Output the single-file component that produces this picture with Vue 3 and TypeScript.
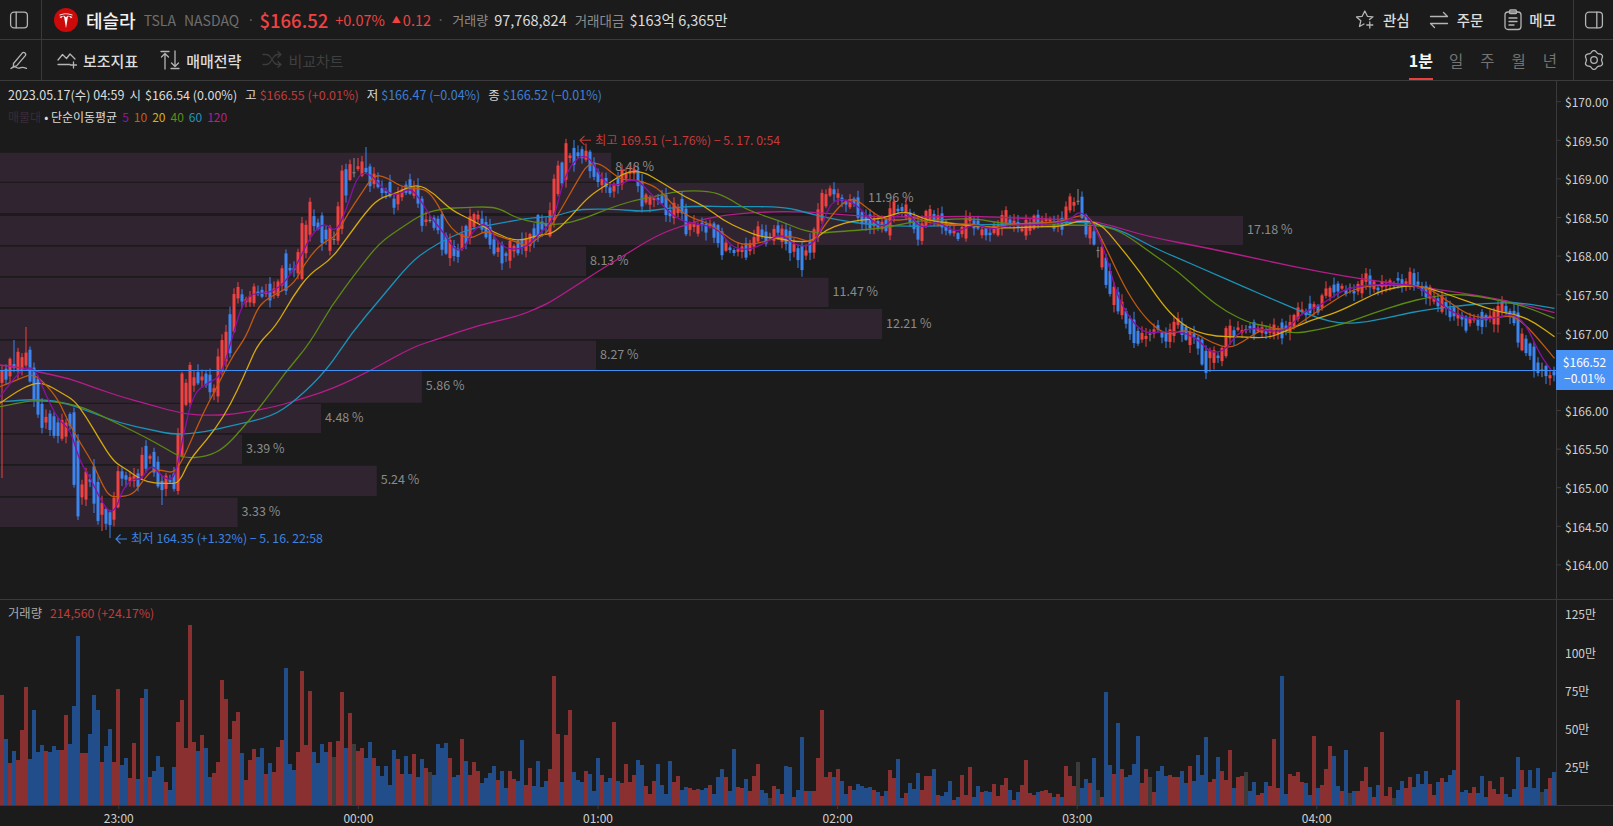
<script setup lang="ts">
type Pt = [number, number]

const parse = (s: string, ox: number, sx: number, oy: number): Pt[] =>
  s.trim().split(/\s+/).map((p) => {
    const [a, b] = p.split(',').map(Number)
    return [ox + a / sx, oy + b / 3] as Pt
  })
const join3 = (a: string, b: string, c: string): Pt[] => [
  ...parse(a, 0, 2.904, 130),
  ...parse(b, 540, 2.904, 130).slice(1),
  ...parse(c, 1080, 2.94, 190).slice(1),
]
const smooth = (pts: Pt[]): string => {
  let d = `M${pts[0][0].toFixed(1)} ${pts[0][1].toFixed(1)}`
  for (let i = 1; i < pts.length - 1; i++) {
    const mx = (pts[i][0] + pts[i + 1][0]) / 2
    const my = (pts[i][1] + pts[i + 1][1]) / 2
    d += `Q${pts[i][0].toFixed(1)} ${pts[i][1].toFixed(1)} ${mx.toFixed(1)} ${my.toFixed(1)}`
  }
  const l = pts[pts.length - 1]
  return d + `L${l[0].toFixed(1)} ${l[1].toFixed(1)}`
}

const pricePath = join3(
  '0,760 20,720 40,700 75,690 90,720 105,790 125,860 150,880 170,900 190,900 205,860 215,950 228,1060 240,1080 265,1040 285,1120 300,1150 320,1160 335,1130 345,1050 360,1030 385,1045 400,1050 415,1000 435,975 450,1000 470,1070 490,1060 505,1060 518,1000 530,830 545,770 575,750 600,750 625,790 645,680 670,600 690,480 705,500 725,510 745,480 770,495 800,485 820,440 840,420 860,420 880,360 900,270 925,280 950,320 965,340 985,260 995,190 1010,140 1040,115 1065,115 1080,140 1100,170 1130,180 1145,220 1165,190 1190,165 1215,190 1230,270 1250,270 1280,290 1300,350 1330,370 1355,310 1385,250 1410,290 1440,360 1470,375 1500,350 1530,340 1568,280',
  '0,310 30,280 45,170 80,80 110,70 145,90 170,140 205,175 240,140 275,130 290,160 300,210 330,210 355,210 380,250 410,225 430,290 470,290 500,290 530,345 570,360 610,355 640,310 665,330 690,300 725,340 760,375 790,350 805,300 820,230 845,185 880,210 915,215 935,270 985,290 1015,280 1030,230 1060,240 1085,280 1105,310 1130,250 1160,270 1190,310 1230,310 1250,270 1290,310 1320,305 1350,265 1400,300 1440,275 1480,275 1515,285 1535,230 1568,215',
  '0,60 20,110 50,165 75,240 110,340 140,390 170,450 195,440 230,420 260,445 285,390 310,430 345,450 370,510 390,490 415,500 440,430 470,420 500,410 540,420 580,425 610,415 640,370 670,365 700,350 725,310 770,295 810,305 840,270 870,295 920,280 970,270 1010,290 1035,320 1060,340 1100,370 1140,395 1180,390 1220,385 1245,350 1280,380 1300,450 1320,480 1345,530 1385,555',
)

const maLines = [
  {
    color: '#b51d8b',
    pts: join3(
      '0,705 60,712 120,728 200,745 280,775 350,800 440,825 530,852 620,857 700,850 800,830 880,805 970,775 1080,720 1200,650 1280,625 1390,585 1500,560 1568,532',
      '0,530 40,510 100,470 160,430 230,385 340,315 420,285 500,260 640,245 780,245 920,258 1100,262 1250,258 1400,265 1568,270',
      '0,85 70,100 200,140 380,175 560,215 700,245 850,270 960,285 1100,305 1250,330 1395,368',
    ),
  },
  {
    color: '#1a93b8',
    pts: join3(
      '0,815 50,812 100,808 180,815 260,845 350,880 440,900 510,915 600,905 680,885 790,860 860,810 950,720 1020,610 1110,500 1190,400 1240,360 1310,320 1370,295 1450,280 1530,265 1568,262',
      '0,255 50,258 100,240 150,237 230,238 300,245 370,235 450,228 560,230 710,230 780,250 860,270 970,285 1100,290 1200,285 1300,285 1420,280 1568,275',
      '0,100 70,105 140,130 210,170 290,205 380,245 480,290 560,325 640,360 700,385 770,402 850,395 940,375 1010,360 1090,350 1190,340 1290,337 1395,355',
    ),
  },
  {
    color: '#5a8a12',
    pts: join3(
      '0,830 50,820 100,810 200,820 260,840 340,880 420,920 480,955 530,985 600,980 650,955 700,900 760,825 830,725 900,640 960,530 1040,420 1100,340 1170,290 1230,250 1290,235 1350,233 1410,230 1450,235 1500,265 1568,280',
      '0,290 60,285 130,265 200,235 270,212 330,200 400,183 490,182 540,200 600,240 690,270 760,300 810,310 860,305 1000,295 1080,275 1140,270 1260,265 1340,280 1440,285 1568,285',
      '0,97 70,107 130,130 210,190 290,245 370,320 430,365 500,400 560,410 620,432 700,420 780,400 860,370 950,340 1030,320 1100,312 1170,318 1250,335 1310,350 1395,385',
    ),
  },
  {
    color: '#d4aa0c',
    pts: join3(
      '0,820 40,790 95,760 130,760 180,790 215,810 250,860 290,930 330,995 370,1020 410,1050 450,1060 490,1060 520,1060 550,990 600,930 650,860 690,780 720,710 750,640 800,590 850,500 900,430 960,390 1010,320 1060,250 1100,205 1150,190 1210,160 1260,190 1310,240 1370,270 1440,310 1500,335 1568,315',
      '0,325 40,310 90,260 140,200 200,160 250,125 300,125 350,155 420,200 480,230 530,270 590,300 640,320 690,325 740,335 790,335 830,300 880,280 930,270 1000,265 1060,240 1120,270 1190,280 1290,290 1350,295 1440,290 1515,290 1568,270',
      '0,90 60,100 110,160 180,250 240,340 290,395 340,425 400,440 470,440 550,445 600,425 680,390 750,370 830,330 890,300 970,285 1030,295 1100,320 1170,345 1230,365 1290,375 1340,400 1395,440',
    ),
  },
  {
    color: '#c2590e',
    pts: join3(
      '0,770 50,750 95,730 130,760 170,810 200,880 240,950 270,1000 300,1070 320,1100 345,1100 385,1095 410,1060 440,1020 470,1020 505,1030 530,990 560,920 590,850 620,790 650,730 680,670 715,620 745,540 770,510 815,485 855,460 885,400 920,355 950,330 975,320 1010,250 1050,190 1085,135 1120,140 1165,170 1205,175 1240,180 1270,220 1310,300 1365,330 1410,300 1450,320 1500,335 1530,350 1568,320',
      '0,325 20,310 60,240 110,150 140,100 175,100 210,130 240,150 280,150 340,170 380,220 430,260 490,280 530,310 580,345 640,340 690,320 740,320 775,335 800,330 830,280 880,215 915,205 950,235 1000,270 1060,270 1090,260 1130,280 1190,285 1250,280 1300,295 1350,285 1440,280 1515,275 1568,255',
      '0,85 30,80 75,170 130,290 180,370 230,420 265,435 300,420 340,430 390,460 440,475 480,455 530,420 580,415 620,420 660,390 720,350 780,310 830,290 880,285 960,285 1020,290 1090,340 1150,380 1220,385 1270,375 1310,405 1350,450 1395,505',
    ),
  },
  {
    color: '#8a10a6',
    pts: join3(
      '0,800 40,745 75,710 105,720 130,790 170,870 205,900 230,990 265,1050 295,1115 320,1150 340,1130 355,1080 385,1045 410,1050 440,1000 470,1040 505,1055 530,930 560,790 610,755 640,740 670,640 700,530 730,490 780,490 820,465 860,410 900,320 940,275 975,310 1005,240 1040,130 1075,130 1110,175 1150,200 1190,170 1225,215 1250,260 1290,310 1320,360 1345,360 1375,300 1410,275 1450,345 1490,360 1530,350 1568,310',
      '0,300 40,270 70,140 110,78 145,80 180,150 215,170 260,150 285,150 320,190 360,230 390,260 430,280 480,285 520,300 560,355 610,360 660,335 700,310 740,345 780,350 810,320 840,220 880,205 920,225 960,270 1000,295 1040,250 1070,250 1110,300 1150,270 1210,310 1260,280 1310,300 1360,285 1440,285 1500,280 1540,270 1568,240',
      '0,50 40,100 75,190 110,320 150,390 190,430 240,425 300,425 350,450 385,490 430,480 460,430 510,412 560,425 610,420 650,370 710,345 770,300 840,285 920,283 990,285 1040,325 1090,365 1150,390 1220,385 1270,370 1310,400 1350,490 1385,540',
    ),
  },
].map((l) => ({ color: l.color, d: smooth(l.pts) }))

const volRaw = `R313 B445 R517 B481 R508 R418 R289 B505 B358 B485 B463 R481 B484 B466 B478 R478 R373 B460 B346 B136 R487 R487 B430 B313 B358 R515 B466 B415 R514 R295 B523 B502 R562 R457 B565 R322 B295 R560 B541 B496 B529 R574 B598 B529 R394 R328 R472 R103 R454 B481 R433 B472 B559 R547 R514 R268 R325 B445 R391 R364 B487 R568 R508 R475 B499 B472 R550 B517 R544 R469 R448 B232 B520 B538 R484 R241 R463 R301 B484 B517 B460 B484 R454 G499 R451 R304 B472 R367 G460 R481 R472 B502 B454 R502 B526 B556 B526 B583 B478 R505 R550 B496 B550 R490 B559 B505 R532 G544 B553 B460 B472 B457 R502 B559 B553 R445 B511 R553 R514 R541 B577 B562 B547 B526 R568 B541 B592 R541 R565 B571 B448 R583 R532 B586 B511
B589 B571 R535 R256 R430 B574 R433 R358 B544 B568 B574 R541 B550 B601 B502 R553 B574 B562 R394 B571 R577 R520 R574 R553 B508 B523 R586 R610 R571 B520 B583 B610 B511 R574 R556 B598 B589 R592 R598 R595 B598 B592 R583 B610 B559 B535 R559 B601 B475 R589 R592 B565 R601 R556 R520 B598 B607 G622 R586 B595 R610 B526 B529 R619 B598 B439 R601 B601 R601 R502 R358 R559 R544 B559 R535 B571 B610 R586 B598 B580 B586 B592 B589 R598 B604 R616 B601 R538 R562 B505 B622 R607 B577 B595 B547 R598 R556 R556 B535 R613 B616 B604 B571 R628 B619 R553 R613 R529 B619 B586 R604 B601 B604 R580 R616 R583 R562 B598 R628 B604 R583 R508 R607 R613 B604 R601 R598 R607 B619 R610 B619 R526 R556 R586 G514
B592 B565 R577 B502 G598 R619 B304 B523 R550 B397 R535 B559 B553 B520 B436 R577 R535 G559 R604 B541 B526 B556 R553 R559 R559 B541 B577 R526 B571 B493 B553 B439 R574 R565 B499 R541 R568 R478 B592 R559 R556 G544 B601 B574 R613 R607 B574 R586 R445 R592 B256 B610 R550 R556 R544 R574 B577 B613 R436 B592 R583 R535 R466 B496 B586 R601 B478 G607 B601 R601 R571 R529 B589 R619 B583 R424 R616 R589 G622 B598 B571 R592 R559 B589 B550 B580 B541 R580 R613 B574 R562 B574 B553 B538 R328 B604 B598 R607 R589 B607 B556 B619 R571 R595 R610 R559 B610 B619 B595 B499 R538 B589 B538 B592 B532 G604 B595 R562 B544`

const volColor: Record<string, string> = { R: '#8a3030', B: '#214d8a', G: '#3c3c3c' }
const bars = volRaw.trim().split(/\s+/).map((t, i) => {
  const h = (643 - Number(t.slice(1))) / 3
  return { k: t[0], x: i * 4, h, y: 805 - h, fill: volColor[t[0]] }
})

const priceAt = (x: number): number => {
  for (let i = 1; i < pricePath.length; i++) {
    const [x0, y0] = pricePath[i - 1]
    const [x1, y1] = pricePath[i]
    if (x <= x1) return x1 === x0 ? y1 : y0 + ((y1 - y0) * (x - x0)) / (x1 - x0)
  }
  return pricePath[pricePath.length - 1][1]
}

let seed = 12345
const rnd = (): number => {
  seed = (seed * 1664525 + 1013904223) % 4294967296
  return seed / 4294967296
}

const wickTargets: Pt[] = [
  [2.5, 478], [26, 327], [15, 340], [366.7, 147], [356, 158], [110, 538], [574, 140], [801.7, 267],
  [1077, 189], [1365, 268], [1417, 272], [1505, 300], [1546, 380], [1209, 372], [938, 216], [162, 505],
  [95, 513], [101.6, 531],
]

const candles = bars.map((b) => {
  const cx = b.x + 2
  const cy = priceAt(cx) + (rnd() - 0.5) * 6
  const slope = Math.abs(priceAt(cx + 2.5) - priceAt(cx - 2.5))
  const r = rnd()
  const body = b.k === 'G' ? 1 : Math.max(2.5, slope * 1.3 + r * r * 16 * (0.45 + b.h / 60))
  const top = cy - body / 2
  const bot = cy + body / 2
  let wt = top - 1 - rnd() * 7
  let wb = bot + 1 + rnd() * 7
  for (const [tx, ty] of wickTargets) {
    if (Math.abs(tx - cx) <= 2) {
      if (ty < wt) wt = ty
      if (ty > wb) wb = ty
    }
  }
  const fill = b.k === 'R' ? '#f04242' : b.k === 'B' ? '#3d85ef' : '#8a8a8a'
  return { cx, top, body, wt, wb, fill }
})

const profile = [
  { t: 152.7, b: 181.7, r: 611.3, l: '8.48 %' },
  { t: 183, b: 213, r: 864, l: '11.96 %' },
  { t: 216, b: 245, r: 1243, l: '17.18 %' },
  { t: 246.7, b: 276, r: 586, l: '8.13 %' },
  { t: 277.7, b: 307, r: 828.6, l: '11.47 %' },
  { t: 309, b: 339, r: 882, l: '12.21 %' },
  { t: 340.7, b: 370, r: 596, l: '8.27 %' },
  { t: 371, b: 402.7, r: 421.8, l: '5.86 %' },
  { t: 404, b: 433, r: 321, l: '4.48 %' },
  { t: 434.7, b: 464, r: 242, l: '3.39 %' },
  { t: 465.7, b: 496, r: 376.7, l: '5.24 %' },
  { t: 497.7, b: 527, r: 237.6, l: '3.33 %' },
]

// The tick at $166.50 sits behind the current-price badge, so it has no label.
const priceTicks = Array.from({ length: 13 }, (_, i) => ({
  label: '$' + (170 - i * 0.5).toFixed(2),
  y: 102.7 + i * 38.6,
})).filter((t) => t.label !== '$166.50')
const volTicks = [
  { label: '125만', y: 615 },
  { label: '100만', y: 653.6 },
  { label: '75만', y: 691.6 },
  { label: '50만', y: 729.6 },
  { label: '25만', y: 767.6 },
]
const timeTicks = [
  { label: '23:00', x: 118.8 },
  { label: '00:00', x: 358.4 },
  { label: '01:00', x: 598 },
  { label: '02:00', x: 837.6 },
  { label: '03:00', x: 1077.2 },
  { label: '04:00', x: 1316.8 },
]
const periods = ['1분', '일', '주', '월', '년']
const maLegend = [
  { t: '5', c: 'm5' },
  { t: '10', c: 'm10' },
  { t: '20', c: 'm20' },
  { t: '40', c: 'm40' },
  { t: '60', c: 'm60' },
  { t: '120', c: 'm120' },
]

const gearPath = (() => {
  let d = ''
  for (let i = 0; i <= 120; i++) {
    const a = (i / 120) * Math.PI * 2
    const r = 8.5 + 0.95 * Math.cos(6 * (a + Math.PI / 2))
    d += `${i ? 'L' : 'M'}${(10 + r * Math.cos(a)).toFixed(2)} ${(10 + r * Math.sin(a)).toFixed(2)}`
  }
  return d + 'Z'
})()
</script>

<template>
  <div class="page">
    <header class="row">
      <div class="cell-left">
        <svg class="ico" width="20" height="20" viewBox="0 0 20 20">
          <rect x="1.600" y="2.200" width="16.800" height="15.600" rx="3.400" />
          <line x1="7.200" y1="2.200" x2="7.200" y2="17.800" />
        </svg>
      </div>
      <div class="mid">
        <svg class="logo" width="24" height="24" viewBox="0 0 24 24">
          <circle cx="12" cy="12" r="12" fill="#cc0a0a" />
          <path
            d="M12 20.200 14 8.400c1.900 0 2.500.2 2.600 1.900 0 0 1.300-.5 1.900-1.400-2.300-1.100-4.700-1.100-4.700-1.100L12 9.200 10.200 7.800S7.800 7.800 5.500 8.900c.6.900 1.900 1.400 1.900 1.400.1-1.700.7-1.900 2.600-1.900zM12 6.300c1.900 0 4.100.3 6.300 1.300.3-.5.4-.8.400-.8C16.300 5.800 14 5.500 12 5.500s-4.300.3-6.700 1.300c0 0 .1.300.4.800 2.200-1 4.400-1.300 6.300-1.300z"
            fill="#fff"
          />
        </svg>
        <span class="name">테슬라</span>
        <span class="tick sym1">TSLA</span>
        <span class="tick sym2">NASDAQ</span>
        <span class="dot d1">·</span>
        <span class="last">$166.52</span>
        <span class="up pct">+0.07%</span>
        <span class="up tri">▲</span>
        <span class="up chg">0.12</span>
        <span class="dot d2">·</span>
        <span class="lab">거래량</span>
        <span class="val v1">97,768,824</span>
        <span class="lab l2">거래대금</span>
        <span class="val v2">$163억 6,365만</span>
        <div class="actions">
          <button class="act a1">
            <svg class="ico" width="21" height="21" viewBox="0 0 21 21">
              <path d="M15.500 10.600 19 7.800l-5.600-.5L10.800 2 8.200 7.300l-5.700.6 4.300 3.900L5.500 17.500l4.500-2.500" />
              <path d="M15.800 13v6M12.800 16h6" />
            </svg>
            <span>관심</span>
          </button>
          <button class="act a2">
            <svg class="ico" width="20" height="20" viewBox="0 0 20 20">
              <path d="M1.500 6.500h17M14.500 2.500l4 4M18.500 13.500h-17M5.500 17.500l-4-4" />
            </svg>
            <span>주문</span>
          </button>
          <button class="act a3">
            <svg class="ico" width="20" height="22" viewBox="0 0 20 22">
              <rect x="2" y="3" width="16" height="17.500" rx="3" />
              <rect x="6.500" y="1" width="7" height="3.600" rx="1.200" />
              <path d="M6 9h8M6 12.500h8M6 16h5" />
            </svg>
            <span>메모</span>
          </button>
        </div>
      </div>
      <div class="cell-right">
        <svg class="ico" width="20" height="20" viewBox="0 0 20 20">
          <rect x="1.600" y="2.200" width="16.800" height="15.600" rx="3.400" />
          <line x1="12.800" y1="2.200" x2="12.800" y2="17.800" />
        </svg>
      </div>
    </header>

    <nav class="row">
      <div class="cell-left">
        <svg class="ico" width="20" height="20" viewBox="0 0 20 20">
          <path d="M4.500 13.500 13 3.300c.9-1 2.200-1.100 3-.4s.9 2 .1 3L7.600 15.800l-3.200.8z" />
          <path d="M2 18.500c2-1.800 3.500-2.200 5-1.300s2.500 1.500 4 .7 3-.9 6.500.5" />
        </svg>
      </div>
      <div class="mid">
        <button class="tool t1">
          <svg class="ico" width="20" height="18" viewBox="0 0 20 18">
            <path d="M1 9 5.500 3.500 9.500 7.500 13 3 18 8" />
            <path d="M1 13.500h12M16.500 11v6M13.500 14h6" />
          </svg>
          <span>보조지표</span>
        </button>
        <button class="tool t2">
          <svg class="ico" width="20" height="20" viewBox="0 0 20 20">
            <path d="M1 1.500h8M5 19V3.500M1.500 7 5 3.500 8.500 7" />
            <path d="M11 18.500h8M15 1v15.500M11.500 13 15 16.500 18.500 13" />
          </svg>
          <span>매매전략</span>
        </button>
        <button class="tool t3">
          <svg class="ico dim" width="20" height="18" viewBox="0 0 20 18">
            <path d="M1 3.500h3.500c1.500 0 2.500.8 3.500 2l4 6c1 1.200 2 2 3.500 2H19M1 13.500h3.500c1.500 0 2.500-.8 3.500-2l4-6c1-1.200 2-2 3.500-2H19M16 .8l3 2.700-3 2.700M16 10.800l3 2.700-3 2.700" />
          </svg>
          <span>비교차트</span>
        </button>
        <div class="periods">
          <span v-for="(p, i) in periods" :key="p" class="period" :class="{ on: i === 0 }">{{ p }}</span>
        </div>
      </div>
      <div class="cell-right">
        <svg class="ico" width="20" height="20" viewBox="0 0 20 20">
          <path :d="gearPath" />
          <circle cx="10" cy="10" r="3.300" />
        </svg>
      </div>
    </nav>

    <section class="pane price-pane">
      <div class="plot">
        <svg class="chart" width="1556" height="518" viewBox="0 81 1556 518">
          <g v-for="r in profile" :key="r.l">
            <rect x="0" :y="r.t" :width="r.r" :height="r.b - r.t" fill="#312431" />
            <text class="pf" :x="r.r + 4" :y="(r.t + r.b) / 2 + 3.500">{{ r.l }}</text>
          </g>
          <g v-for="(c, i) in candles" :key="i">
            <line :x1="c.cx" :x2="c.cx" :y1="c.wt" :y2="c.wb" :stroke="c.fill" stroke-width="1" />
            <rect :x="c.cx - 1.500" :y="c.top" width="3" :height="c.body" :fill="c.fill" />
          </g>
          <path v-for="l in maLines" :key="l.color" :d="l.d" fill="none" :stroke="l.color" stroke-width="1.300" />
          <line x1="0" x2="1556" y1="370.500" y2="370.500" stroke="#3f90f5" stroke-width="1.100" />
          <path d="M591 140.300H579.500M584.500 135.800l-4.500 4.500 4.500 4.500" fill="none" stroke="#c23c3c" stroke-width="1.100" />
          <text class="note hi" x="595" y="144.700">최고 169.51 (−1.76%) − 5. 17. 0:54</text>
          <path d="M127 539H115.500M120.500 534.500l-4.500 4.500 4.500 4.500" fill="none" stroke="#3f83e0" stroke-width="1.100" />
          <text class="note lo" x="131" y="543.400">최저 164.35 (+1.32%) − 5. 16. 22:58</text>
        </svg>
        <div class="legend">
          <div class="lg-row">
            <span class="w">2023.05.17(수) 04:59</span>
            <span class="w g5">시</span><span class="w g4">$166.54 (0.00%)</span>
            <span class="w g8">고</span><span class="r g3">$166.55 (+0.01%)</span>
            <span class="w g8">저</span><span class="b g3">$166.47 (−0.04%)</span>
            <span class="w g8">종</span><span class="b g3">$166.52 (−0.01%)</span>
          </div>
          <div class="lg-row small">
            <span class="off">매물대</span>
            <span class="w g3">• 단순이동평균</span>
            <span v-for="m in maLegend" :key="m.t" :class="['ma', m.c]">{{ m.t }}</span>
          </div>
        </div>
      </div>
      <div class="axis">
        <svg width="56" height="518" viewBox="1557 81 56 518">
          <g v-for="t in priceTicks" :key="t.label">
            <line x1="1557" x2="1561" :y1="t.y - 1" :y2="t.y - 1" stroke="#3a3a3a" />
            <text class="ax" x="1565" :y="t.y + 4.300">{{ t.label }}</text>
          </g>
        </svg>
        <div class="badge"><span>$166.52</span><span>−0.01%</span></div>
      </div>
    </section>

    <section class="pane vol-pane">
      <div class="plot">
        <svg class="chart" width="1556" height="205" viewBox="0 600 1556 205">
          <rect v-for="b in bars" :key="b.x" :x="b.x" :y="b.y" width="4" :height="b.h" :fill="b.fill" shape-rendering="crispEdges" />
        </svg>
        <div class="legend vlg">
          <span class="vt">거래량</span>
          <span class="r g8">214,560 (+24.17%)</span>
        </div>
      </div>
      <div class="axis">
        <svg width="56" height="205" viewBox="1557 600 56 205">
          <text v-for="t in volTicks" :key="t.label" class="ax" x="1565" :y="t.y + 4.300">{{ t.label }}</text>
        </svg>
      </div>
    </section>

    <footer class="times">
      <svg width="1613" height="21" viewBox="0 805 1613 21">
        <g v-for="t in timeTicks" :key="t.label">
          <line :x1="t.x" :x2="t.x" y1="805" y2="809" stroke="#3a3a3a" />
          <text class="ax tm" :x="t.x" y="823.300">{{ t.label }}</text>
        </g>
      </svg>
    </footer>
  </div>
</template>

<style scoped>
.page {
  width: 1613px;
  height: 826px;
  overflow: hidden;
  display: flex;
  flex-direction: column;
  background: #1b1b1b;
  color: #d8d8d8;
  font-family: "Noto Sans CJK KR", "Noto Sans", sans-serif;
}
.row {
  display: flex;
  height: 40px;
  flex: none;
  border-bottom: 1px solid #3a3a3a;
  box-sizing: border-box;
}
.row + .row {
  height: 41px;
}
.cell-left {
  width: 42px;
  flex: none;
  box-sizing: border-box;
  border-right: 1px solid #3a3a3a;
  display: flex;
  align-items: center;
  justify-content: center;
  padding-right: 3px;
}
.cell-right {
  width: 40px;
  flex: none;
  box-sizing: border-box;
  border-left: 1px solid #3a3a3a;
  display: flex;
  align-items: center;
  justify-content: center;
}
.mid {
  flex: 1;
  min-width: 0;
  display: flex;
  align-items: center;
  position: relative;
}
.ico {
  fill: none;
  stroke: #b4b4b4;
  stroke-width: 1.300;
  stroke-linecap: round;
  stroke-linejoin: round;
  flex: none;
}
.ico.dim {
  stroke: #3c3c3c;
}
.logo {
  margin-left: 12px;
  flex: none;
}
.name {
  margin-left: 8px;
  font-size: 18px;
  font-weight: 500;
  color: #f2f2f2;
  white-space: nowrap;
}
.tick {
  font-size: 14px;
  color: #6e6e6e;
}
.sym1 {
  margin-left: 8px;
}
.sym2 {
  margin-left: 8px;
}
.dot {
  font-size: 13px;
  color: #6e6e6e;
}
.d1 {
  margin-left: 8px;
}
.last {
  margin-left: 5px;
  font-size: 18.500px;
  font-weight: 500;
  color: #f04242;
}
.up {
  color: #f04242;
  font-size: 14.500px;
}
.pct {
  margin-left: 7px;
}
.tri {
  margin-left: 7px;
  font-size: 9px;
}
.chg {
  margin-left: 2px;
}
.d2 {
  margin-left: 6px;
}
.lab {
  font-size: 13px;
  color: #8c8c8c;
  margin-left: 8px;
}
.val {
  font-size: 14.500px;
  color: #dcdcdc;
  white-space: nowrap;
}
.v1 {
  margin-left: 6px;
}
.l2 {
  margin-left: 8px;
  font-size: 13.500px;
}
.v2 {
  margin-left: 5px;
}
.actions {
  margin-left: auto;
  display: flex;
  align-items: center;
  padding-right: 17px;
}
.act,
.tool {
  display: flex;
  align-items: center;
  background: none;
  border: 0;
  padding: 0;
  color: #dcdcdc;
  font: inherit;
  font-size: 14.500px;
  font-weight: 500;
  gap: 6px;
}
.tool {
  font-size: 15px;
}
.a1,
.a2 {
  gap: 8px;
}
.a2 {
  margin-left: 19px;
}
.a3 {
  margin-left: 20px;
}
.t1 {
  margin-left: 15px;
}
.t2 {
  margin-left: 22px;
}
.t3 {
  margin-left: 21px;
  color: #3f3f3f;
  font-weight: 400;
}
.periods {
  margin-left: auto;
  display: flex;
  height: 100%;
  padding-right: 16px;
  gap: 17px;
}
.period {
  display: flex;
  align-items: center;
  font-size: 15.500px;
  color: #737373;
  border-bottom: 2px solid transparent;
  box-sizing: border-box;
  padding-top: 2px;
}
.period.on {
  font-size: 16px;
  color: #f5f5f5;
  font-weight: 700;
  border-bottom-color: #ea4040;
  margin-right: -1px;
}
.pane {
  display: flex;
  flex: none;
  box-sizing: border-box;
}
.price-pane {
  height: 519px;
  border-bottom: 1px solid #3a3a3a;
}
.vol-pane {
  height: 205px;
}
.plot {
  width: 1556px;
  flex: none;
  position: relative;
}
.chart {
  display: block;
}
.axis {
  width: 57px;
  flex: none;
  box-sizing: border-box;
  border-left: 1px solid #3a3a3a;
  position: relative;
}
.axis svg {
  display: block;
}
.legend {
  position: absolute;
  left: 8px;
  top: 3px;
  font-size: 12.500px;
}
.lg-row {
  height: 22px;
  line-height: 22px;
  display: flex;
  white-space: nowrap;
}
.lg-row.small {
  font-size: 12px;
}
.w {
  color: #dcdcdc;
}
.r {
  color: #c23c3c;
}
.b {
  color: #3f7fd8;
}
.off {
  color: #3a2c38;
}
.g3 {
  margin-left: 3px;
}
.g4 {
  margin-left: 4px;
}
.g5 {
  margin-left: 5px;
}
.g8 {
  margin-left: 8px;
}
.ma {
  margin-left: 5px;
}
.m5 {
  color: #8f16ad;
}
.m10 {
  color: #c85d10;
}
.m20 {
  color: #d9ae0e;
}
.m40 {
  color: #5b8f14;
}
.m60 {
  color: #1c96bd;
}
.m120 {
  color: #b81e8e;
}
.vlg {
  top: 2px;
  line-height: 22px;
  font-size: 12.300px;
}
.vt {
  color: #aaaaaa;
}
.badge {
  position: absolute;
  left: -1px;
  right: 0;
  top: 269px;
  height: 40px;
  background: #4a93f6;
  color: #fff;
  font-size: 12px;
  display: flex;
  flex-direction: column;
  align-items: center;
  justify-content: center;
  line-height: 16px;
}
.times {
  flex: none;
  height: 21px;
  border-top: 1px solid #3a3a3a;
  box-sizing: border-box;
}
.times svg {
  display: block;
  margin-top: -1px;
}
.pf {
  font-size: 12.500px;
  fill: #8a8a8a;
}
.note {
  font-size: 12.300px;
}
.hi {
  fill: #c23c3c;
}
.lo {
  fill: #3f83e0;
}
.ax {
  font-size: 12px;
  fill: #cfcfcf;
}
.tm {
  text-anchor: middle;
}
svg text {
  font-family: "Noto Sans CJK KR", "Noto Sans", sans-serif;
}
</style>
